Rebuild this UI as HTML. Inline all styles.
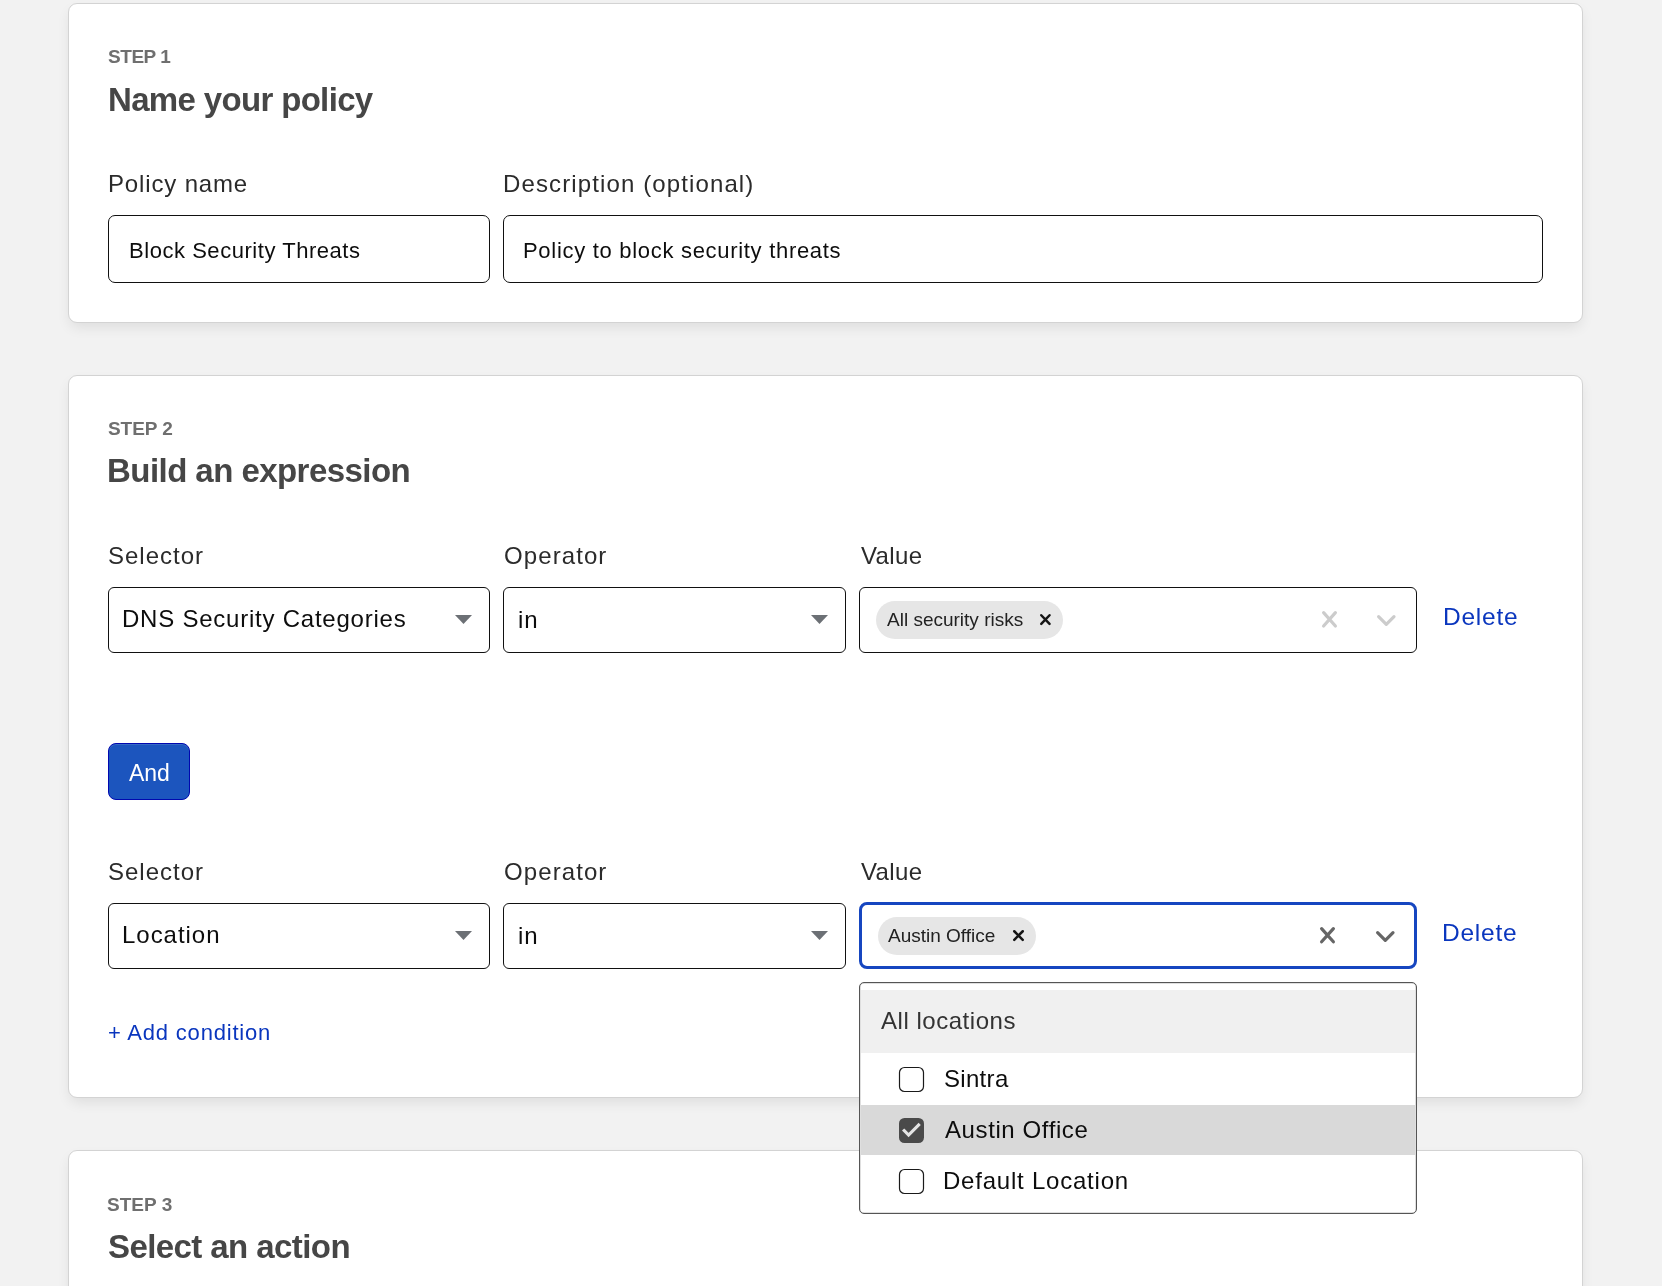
<!DOCTYPE html>
<html><head><meta charset="utf-8"><style>
html,body{margin:0;padding:0;}
body{width:1662px;height:1286px;overflow:hidden;background:#f2f2f2;position:relative;font-family:"Liberation Sans",sans-serif;}
.card{position:absolute;left:68px;width:1515px;box-sizing:border-box;background:#fff;border:1px solid #d3d3d3;border-radius:9px;box-shadow:0 6px 14px -2px rgba(0,0,0,0.09);}
.t{position:absolute;line-height:1;white-space:nowrap;will-change:transform;}
.box{position:absolute;box-sizing:border-box;background:#fff;}
.ic{position:absolute;overflow:visible;}
.chip{position:absolute;background:#e6e6e6;border-radius:19px;}
.btn{position:absolute;background:#1c55be;border:1px solid #0008b0;box-sizing:border-box;border-radius:8px;box-shadow:inset 0 1px 0 rgba(255,255,255,0.12);}
.menu{position:absolute;box-sizing:border-box;background:#fff;border:1px solid #555;border-radius:5px;box-shadow:inset 0 0 0 0.5px rgba(0,0,0,0.25);}
</style></head><body>
<div class="card" style="top:3px;height:320px"></div>
<div class="card" style="top:375px;height:723px"></div>
<div class="card" style="top:1150px;height:300px"></div>
<div class="t" style="left:108.10px;top:47.41px;font-size:19px;color:#6f6f6f;font-weight:bold;letter-spacing:-0.45px">STEP 1</div>
<div class="t" style="left:108.00px;top:83.36px;font-size:33px;color:#464646;font-weight:bold;letter-spacing:-0.66px">Name your policy</div>
<div class="t" style="left:108.10px;top:172.08px;font-size:24px;color:#2b2b2b;font-weight:normal;letter-spacing:0.85px">Policy name</div>
<div class="t" style="left:502.80px;top:172.08px;font-size:24px;color:#2b2b2b;font-weight:normal;letter-spacing:1.12px">Description (optional)</div>
<div class="box" style="left:108px;top:215px;width:382px;height:68px;border:1px solid #111;border-radius:7px;"></div>
<div class="box" style="left:503px;top:215px;width:1040px;height:68px;border:1px solid #111;border-radius:7px;"></div>
<div class="t" style="left:128.90px;top:239.57px;font-size:22px;color:#0d0d0d;font-weight:normal;letter-spacing:0.54px">Block Security Threats</div>
<div class="t" style="left:523.20px;top:239.57px;font-size:22px;color:#0d0d0d;font-weight:normal;letter-spacing:0.7px">Policy to block security threats</div>
<div class="t" style="left:108.10px;top:419.11px;font-size:19px;color:#6f6f6f;font-weight:bold;letter-spacing:-0.05px">STEP 2</div>
<div class="t" style="left:107.40px;top:454.46px;font-size:33px;color:#464646;font-weight:bold;letter-spacing:-0.55px">Build an expression</div>
<div class="t" style="left:107.90px;top:543.68px;font-size:24px;color:#2b2b2b;font-weight:normal;letter-spacing:1.0px">Selector</div>
<div class="t" style="left:504.30px;top:543.68px;font-size:24px;color:#2b2b2b;font-weight:normal;letter-spacing:1.09px">Operator</div>
<div class="t" style="left:860.70px;top:543.68px;font-size:24px;color:#2b2b2b;font-weight:normal;letter-spacing:0.35px">Value</div>
<div class="box" style="left:108px;top:587px;width:382px;height:66px;border:1px solid #111;border-radius:6px;"></div>
<div class="t" style="left:121.50px;top:607.38px;font-size:24px;color:#0d0d0d;font-weight:normal;letter-spacing:0.77px">DNS Security Categories</div>
<svg class="ic" style="left:455px;top:615px" width="17" height="9" viewBox="0 0 17 9"><path d="M0 0H17L8.5 9Z" fill="#6c7075"/></svg>
<div class="box" style="left:503px;top:587px;width:343px;height:66px;border:1px solid #111;border-radius:6px;"></div>
<div class="t" style="left:518.40px;top:607.58px;font-size:24px;color:#0d0d0d;font-weight:normal;letter-spacing:0.85px">in</div>
<svg class="ic" style="left:810.5px;top:615px" width="17" height="9" viewBox="0 0 17 9"><path d="M0 0H17L8.5 9Z" fill="#6c7075"/></svg>
<div class="box" style="left:859px;top:587px;width:558px;height:66px;border:1px solid #111;border-radius:6px;"></div>
<div class="chip" style="left:876.4px;top:601.2px;width:186.6px;height:37.4px"></div>
<div class="t" style="left:886.60px;top:610.31px;font-size:19px;color:#222;font-weight:normal;letter-spacing:0px">All security risks</div>
<svg class="ic" style="left:1040px;top:614.3px" width="10.8" height="11.1" viewBox="0 0 10.8 11.1"><path d="M1.25 1.25L9.55 9.85M9.55 1.25L1.25 9.85" stroke="#151515" stroke-width="2.5" stroke-linecap="round"/></svg>
<svg class="ic" style="left:1321.7px;top:611.4px" width="15" height="16.6" viewBox="0 0 15 16.6"><path d="M1.6 1.6L13.4 15.000000000000002M13.4 1.6L1.6 15.000000000000002" stroke="#cccccc" stroke-width="3.2" stroke-linecap="round"/></svg>
<svg class="ic" style="left:1377px;top:615px" width="19" height="12" viewBox="0 0 19 12"><path d="M1.6 1.6L9.3 9.4L17 1.6" fill="none" stroke="#cccccc" stroke-width="3.2" stroke-linecap="round" stroke-linejoin="round"/></svg>
<div class="t" style="left:1442.60px;top:604.66px;font-size:24.5px;color:#0a36be;font-weight:normal;letter-spacing:0.75px">Delete</div>
<div class="btn" style="left:108px;top:743px;width:82px;height:57px"></div>
<div class="t" style="left:128.50px;top:761.53px;font-size:23px;color:#fff;font-weight:normal;letter-spacing:-0.1px">And</div>
<div class="t" style="left:107.90px;top:859.68px;font-size:24px;color:#2b2b2b;font-weight:normal;letter-spacing:1.0px">Selector</div>
<div class="t" style="left:504.30px;top:859.68px;font-size:24px;color:#2b2b2b;font-weight:normal;letter-spacing:1.09px">Operator</div>
<div class="t" style="left:860.70px;top:859.68px;font-size:24px;color:#2b2b2b;font-weight:normal;letter-spacing:0.35px">Value</div>
<div class="box" style="left:108px;top:903px;width:382px;height:66px;border:1px solid #111;border-radius:6px;"></div>
<div class="t" style="left:121.50px;top:923.38px;font-size:24px;color:#0d0d0d;font-weight:normal;letter-spacing:0.97px">Location</div>
<svg class="ic" style="left:455px;top:931px" width="17" height="9" viewBox="0 0 17 9"><path d="M0 0H17L8.5 9Z" fill="#6c7075"/></svg>
<div class="box" style="left:503px;top:903px;width:343px;height:66px;border:1px solid #111;border-radius:6px;"></div>
<div class="t" style="left:518.40px;top:923.58px;font-size:24px;color:#0d0d0d;font-weight:normal;letter-spacing:0.85px">in</div>
<svg class="ic" style="left:810.5px;top:931px" width="17" height="9" viewBox="0 0 17 9"><path d="M0 0H17L8.5 9Z" fill="#6c7075"/></svg>
<div class="box" style="left:859px;top:902px;width:558px;height:67px;border:3px solid #1646c0;border-radius:8px;"></div>
<div class="chip" style="left:878px;top:916.7px;width:158px;height:38px"></div>
<div class="t" style="left:887.80px;top:926.11px;font-size:19px;color:#222;font-weight:normal;letter-spacing:0px">Austin Office</div>
<svg class="ic" style="left:1013px;top:930.2px" width="11" height="11.1" viewBox="0 0 11 11.1"><path d="M1.25 1.25L9.75 9.85M9.75 1.25L1.25 9.85" stroke="#151515" stroke-width="2.5" stroke-linecap="round"/></svg>
<svg class="ic" style="left:1320px;top:927.4px" width="15" height="16.4" viewBox="0 0 15 16.4"><path d="M1.6 1.6L13.4 14.799999999999999M13.4 1.6L1.6 14.799999999999999" stroke="#666666" stroke-width="3.2" stroke-linecap="round"/></svg>
<svg class="ic" style="left:1375.7px;top:930.9px" width="19" height="12" viewBox="0 0 19 12"><path d="M1.6 1.6L9.3 9.4L17 1.6" fill="none" stroke="#666666" stroke-width="3.2" stroke-linecap="round" stroke-linejoin="round"/></svg>
<div class="t" style="left:1441.90px;top:920.76px;font-size:24.5px;color:#0a36be;font-weight:normal;letter-spacing:0.75px">Delete</div>
<div class="t" style="left:108.10px;top:1022.47px;font-size:22px;color:#0a36be;font-weight:normal;letter-spacing:0.8px">+ Add condition</div>
<div class="menu" style="left:859px;top:982px;width:558px;height:232px"></div>
<div style="position:absolute;left:860.5px;width:554px;top:989.8px;height:63.6px;background:#f0f0f0"></div>
<div style="position:absolute;left:860.5px;width:554px;top:1104.6px;height:50.3px;background:#d9d9d9"></div>
<div class="t" style="left:880.50px;top:1009.38px;font-size:24px;color:#333;font-weight:normal;letter-spacing:0.53px">All locations</div>
<svg class="ic" style="left:899px;top:1066.6px" width="25" height="25" viewBox="0 0 25 25"><rect x="0.5" y="0.5" width="24" height="24" rx="5" fill="#fff" stroke="#1a1a1a" stroke-width="1.2"/></svg>
<div class="t" style="left:944.30px;top:1066.78px;font-size:24px;color:#0d0d0d;font-weight:normal;letter-spacing:0.31px">Sintra</div>
<svg class="ic" style="left:899px;top:1117.8px" width="25" height="25" viewBox="0 0 25 25"><rect x="0" y="0" width="25" height="25" rx="5.5" fill="#4a4a4a"/><path d="M5.2 12.6L9.6 17L19.6 7" fill="none" stroke="#e4e4e4" stroke-width="3.1" stroke-linecap="square" stroke-linejoin="miter"/></svg>
<div class="t" style="left:945.30px;top:1117.68px;font-size:24px;color:#0d0d0d;font-weight:normal;letter-spacing:0.6px">Austin Office</div>
<svg class="ic" style="left:899px;top:1168.7px" width="25" height="25" viewBox="0 0 25 25"><rect x="0.5" y="0.5" width="24" height="24" rx="5" fill="#fff" stroke="#1a1a1a" stroke-width="1.2"/></svg>
<div class="t" style="left:942.90px;top:1169.18px;font-size:24px;color:#0d0d0d;font-weight:normal;letter-spacing:0.78px">Default Location</div>
<div class="t" style="left:107.30px;top:1194.61px;font-size:19px;color:#6f6f6f;font-weight:bold;letter-spacing:0.02px">STEP 3</div>
<div class="t" style="left:108.00px;top:1230.36px;font-size:33px;color:#464646;font-weight:bold;letter-spacing:-0.58px">Select an action</div>
</body></html>
